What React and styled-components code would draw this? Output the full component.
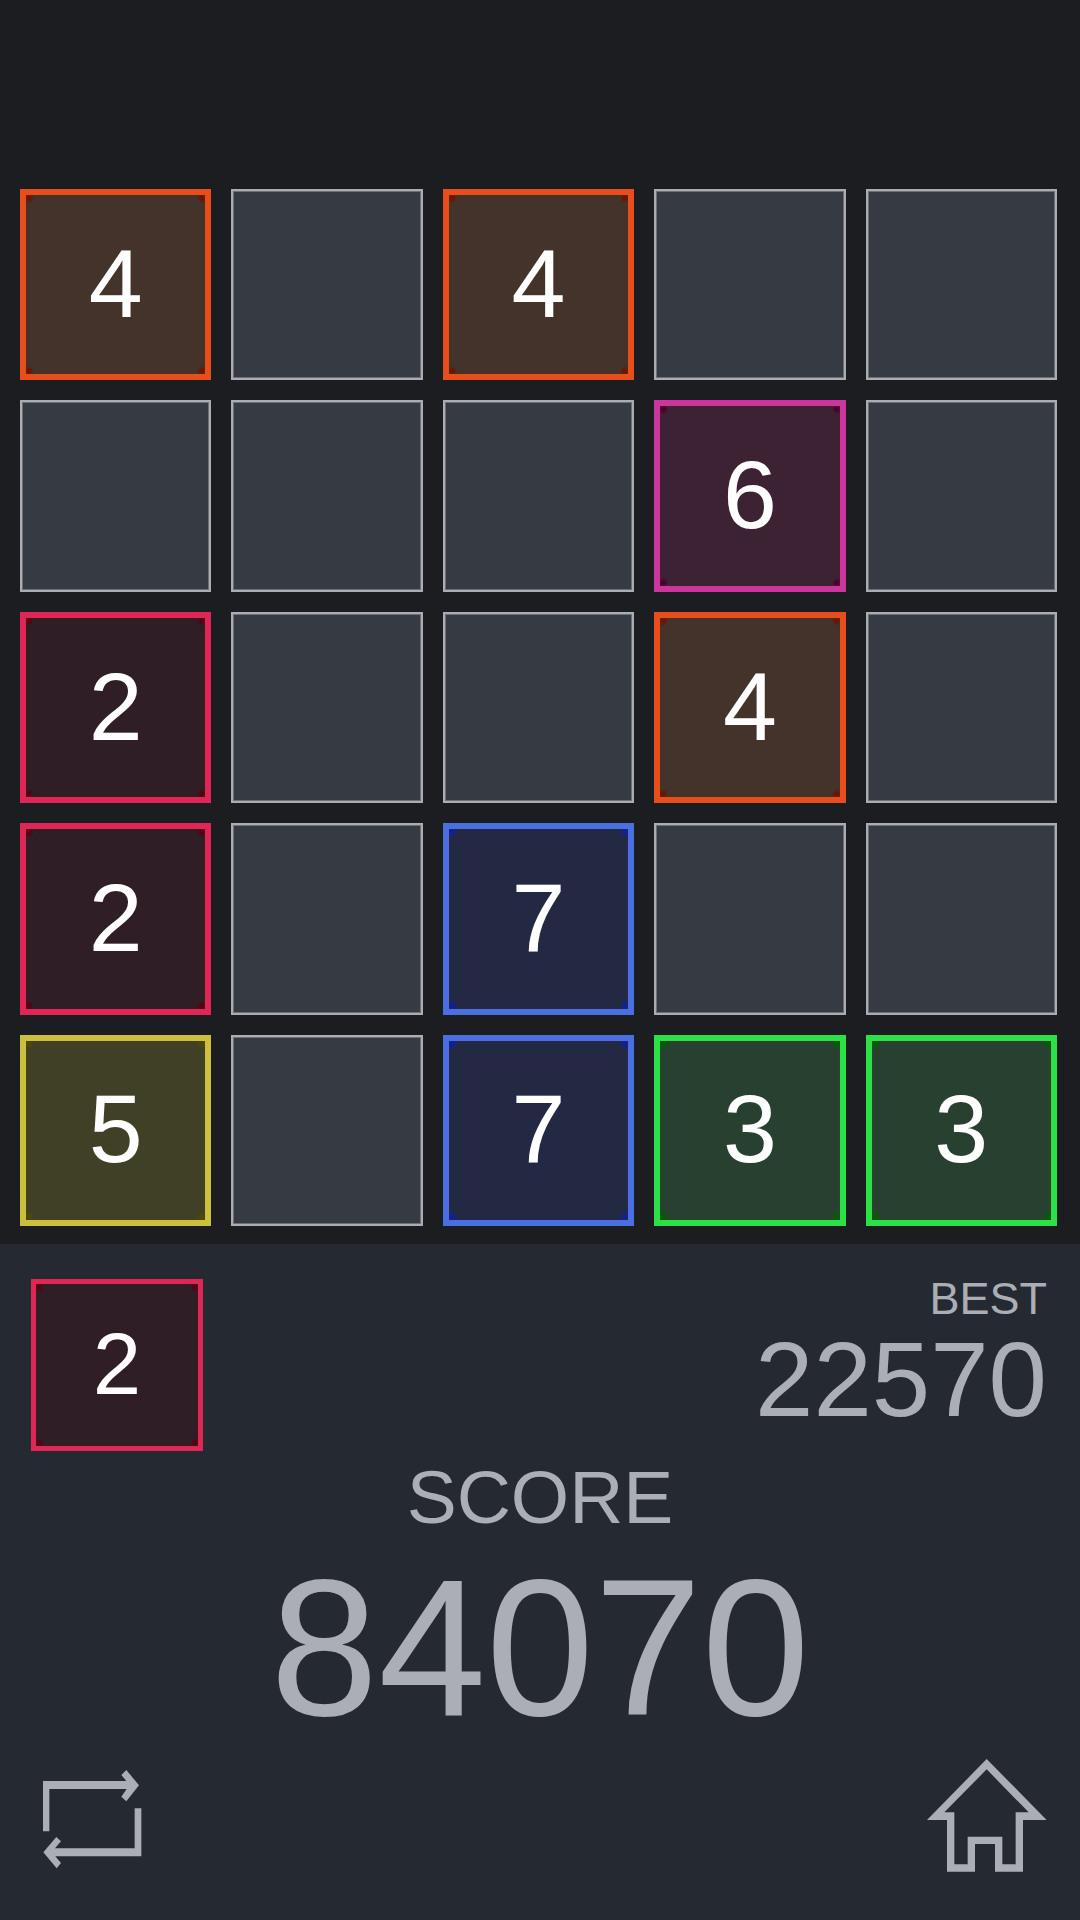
import React from 'react'
import styled, { createGlobalStyle } from 'styled-components';

const GlobalStyle = createGlobalStyle`
  *{
    box-sizing:border-box;
    margin:0;
    padding:0;
  }
  body{
    background-color:#1c1d20;
    font-family:"Liberation Sans", Arial, sans-serif;
  }
`

const tileColors = {
  2: { line: '#e02656', fill: '#2f1e26', edge: '#401f22', corner: '#5a0010' },
  3: { line: '#2be147', fill: '#284030', edge: '#2c5020', corner: '#006000' },
  4: { line: '#e84e1c', fill: '#43332b', edge: '#543018', corner: '#6e1400' },
  5: { line: '#cdbf3e', fill: '#404027', edge: '#4a4810', corner: '#4e4a00' },
  6: { line: '#cb359d', fill: '#3c2233', edge: '#501e30', corner: '#4a0030' },
  7: { line: '#4a6fe0', fill: '#242943', edge: '#242860', corner: '#10209a' },
}

const board = [
  [4, 0, 4, 0, 0],
  [0, 0, 0, 6, 0],
  [2, 0, 0, 4, 0],
  [2, 0, 7, 0, 0],
  [5, 0, 7, 3, 3],
]

const corners = [
  '3px 3px',
  'calc(100% - 3px) 3px',
  '3px calc(100% - 3px)',
  'calc(100% - 3px) calc(100% - 3px)',
]

const Page = styled.main`
  min-height:100vh;
  display:flex;
  flex-direction:column;
  background-color:#1c1d20;
`
const Board = styled.section`
  display:grid;
  grid-template-columns:repeat(5, 1fr);
  gap:20px;
  padding:189px 23px 18px 20px;
`
const Cell = styled.div`
  aspect-ratio:1;
  background-color:#363a42;
  border:2px solid #aaadb2;
  box-shadow:inset 0 0 0 1px #6d7077;
`
const Tile = styled.div`
  aspect-ratio:1;
  display:flex;
  align-items:center;
  justify-content:center;
  padding-bottom:3px;
  color:#fff;
  font-size:97px;
  line-height:1;
  border:6px solid ${props => props.$colors.line};
  box-shadow:inset 0 0 3px ${props => props.$colors.edge};
  background-color:${props => props.$colors.fill};
  background-image:${props => corners
    .map(at => `radial-gradient(circle 5px at ${at}, ${props.$colors.corner} 40%, transparent)`)
    .join(',')};
  background-origin:padding-box;
  background-repeat:no-repeat;
`
const NextTile = styled(Tile)`
  width:172px;
  font-size:87px;
  border-width:5px;
`
const Panel = styled.section`
  flex:1;
  display:flex;
  flex-direction:column;
  padding-top:35px;
  background-color:#252932;
  color:#abaeb4;
`
const TopRow = styled.div`
  display:flex;
  justify-content:space-between;
  align-items:flex-start;
  padding:0 33px 0 31px;
`
const Best = styled.div`
  text-align:right;
`
const BestLabel = styled.h2`
  font-size:45px;
  line-height:40px;
  font-weight:400;
`
const BestValue = styled.p`
  font-size:105px;
  line-height:122px;
`
const Score = styled.div`
  text-align:center;
`
const ScoreLabel = styled.h1`
  font-size:75px;
  line-height:92px;
  font-weight:400;
`
const ScoreValue = styled.p`
  font-size:194px;
  line-height:210px;
`
const Actions = styled.div`
  display:flex;
  justify-content:space-between;
  padding:6px 33px 48px 43px;
`
const IconButton = styled.button`
  display:flex;
  border:none;
  background:none;
  color:inherit;
  cursor:pointer;
`

const RestartIcon = () => (
  <svg width="99" height="113" viewBox="68 26 297 339" fill="currentColor" aria-hidden="true">
    <path d="M68 92H318L303 74L318 59L356 105L318 153L303 139L319 116H87V243H68Z" />
    <path d="M363 174V318H105L122 338L109 354L69 306L108 260L122 273L104 294H343V174Z" />
  </svg>
)

const HomeIcon = () => (
  <svg width="120" height="113" viewBox="52 56 360 339" fill="currentColor" aria-hidden="true">
    <path
      fillRule="evenodd"
      d="M231 56L411 239H340V394H256V311H196V394H112V239H52ZM231 87L104 216H134V372H174V289H278V372H318V216H357Z"
    />
  </svg>
)

const App = () => {
  return (
    <>
      <GlobalStyle />
      <Page>
        <Board aria-label="Board">
          {board.flat().map((value, i) => (
            value ? <Tile key={i} $colors={tileColors[value]}>{value}</Tile> : <Cell key={i} />
          ))}
        </Board>
        <Panel>
          <TopRow>
            <NextTile $colors={tileColors[2]}>2</NextTile>
            <Best>
              <BestLabel>BEST</BestLabel>
              <BestValue>22570</BestValue>
            </Best>
          </TopRow>
          <Score>
            <ScoreLabel>SCORE</ScoreLabel>
            <ScoreValue>84070</ScoreValue>
          </Score>
          <Actions>
            <IconButton type="button" aria-label="Restart">
              <RestartIcon />
            </IconButton>
            <IconButton type="button" aria-label="Home">
              <HomeIcon />
            </IconButton>
          </Actions>
        </Panel>
      </Page>
    </>
  )
}

export default App
